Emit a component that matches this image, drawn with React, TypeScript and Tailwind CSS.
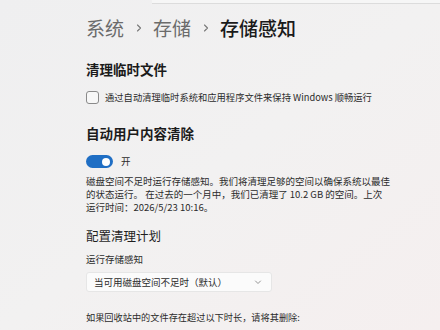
import React from "react";

const cjk = "font-['Segoe_UI','Noto_Sans_CJK_SC','Noto_Sans',sans-serif]";

const Chevron = () => (
  <svg width="10" height="10" viewBox="0 0 10 10" className="mx-[9.5px]">
    <path d="M3.5 2 L6.5 5 L3.5 8" fill="none" stroke="#777" strokeWidth="1.1" strokeLinecap="round" strokeLinejoin="round" />
  </svg>
);

const App = () => {
  return (
    <div className={`w-[440px] h-[330px] overflow-hidden bg-gradient-to-br from-[#efeff0] via-[#f2f1f1] to-[#f5efef] ${cjk}`}>
      <div className="flex h-[4px]">
        <div className="w-[152px] shrink-0" />
        <div className="flex-1 border-b border-[#dcdcdc] bg-[#f6f6f6]" />
      </div>

      <div className="pl-[86px]">
        {/* breadcrumb */}
        <div className="mt-[12px] flex items-center text-[19px] leading-[24px]">
          <span className="text-[#6b6b6b]">系统</span>
          <Chevron />
          <span className="text-[#6b6b6b]">存储</span>
          <Chevron />
          <span className="text-[#1a1a1a] font-medium">存储感知</span>
        </div>

        <h2 className="mt-[19px] text-[13.5px] leading-[20px] font-semibold text-[#1b1b1b]">清理临时文件</h2>

        <label className="mt-[11px] flex items-center h-[14px]">
          <span className="w-[13px] h-[13px] rounded-[3px] border border-[#8a8a8a] bg-[#f7f7f7] shrink-0" />
          <span className="ml-[6px] text-[9.3px] leading-[13px] text-[#2b2b2b]">
            通过自动清理临时系统和应用程序文件来保持 Windows 顺畅运行
          </span>
        </label>

        <h2 className="mt-[19px] text-[13.5px] leading-[20px] font-semibold text-[#1b1b1b]">自动用户内容清除</h2>

        <div className="mt-[12px] flex items-center h-[13px]">
          <div className="w-[27px] h-[13px] rounded-full bg-[#1f6ec4] flex items-center justify-end pr-[3px]">
            <div className="w-[8px] h-[8px] rounded-full bg-white" />
          </div>
          <span className="ml-[8px] text-[9.5px] leading-[13px] text-[#2b2b2b]">开</span>
        </div>

        <p className="mt-[7px] text-[9.5px] leading-[13px] text-[#2b2b2b]">
          <span className="block">磁盘空间不足时运行存储感知。我们将清理足够的空间以确保系统以最佳</span>
          <span className="block">的状态运行。 在过去的一个月中，我们已清理了 10.2 GB 的空间。上次</span>
          <span className="block">运行时间：2026/5/23 10:16。</span>
        </p>

        <h3 className="mt-[13px] text-[12.5px] leading-[18px] text-[#1f1f1f]">配置清理计划</h3>

        <div className="mt-[8px] text-[9.5px] leading-[13px] text-[#2b2b2b]">运行存储感知</div>

        <div className="mt-[6px] w-[186px] h-[20px] rounded-[3px] bg-[#fbfbfb] border border-[#e6e6e6] flex items-center pl-[7px] pr-[9px]">
          <span className="flex-1 text-[9.5px] leading-[13px] text-[#2b2b2b]">当可用磁盘空间不足时（默认）</span>
          <svg width="8" height="8" viewBox="0 0 8 8">
            <path d="M1.5 3 L4 5.5 L6.5 3" fill="none" stroke="#888" strokeWidth="0.9" strokeLinecap="round" strokeLinejoin="round" />
          </svg>
        </div>

        <div className="mt-[19px] text-[9.2px] leading-[13px] text-[#2b2b2b]">
          如果回收站中的文件存在超过以下时长，请将其删除:
        </div>
      </div>
    </div>
  );
};

export default App;
